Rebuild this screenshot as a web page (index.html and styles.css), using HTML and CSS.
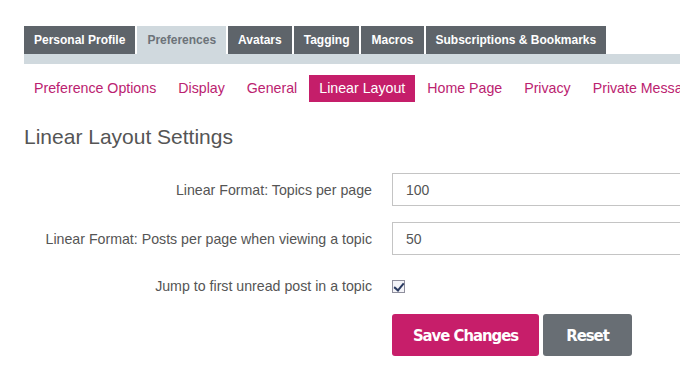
FILE: index.html
```html
<!DOCTYPE html>
<html lang="en">
<head>
  <meta charset="UTF-8" />
  <title>Linear Layout Settings</title>
  <link rel="stylesheet" href="styles.css">
</head>
<body>
  <div class="page">
    <ul class="tabs">
      <li class="tab">Personal Profile</li>
      <li class="tab active">Preferences</li>
      <li class="tab">Avatars</li>
      <li class="tab">Tagging</li>
      <li class="tab">Macros</li>
      <li class="tab">Subscriptions &amp; Bookmarks</li>
    </ul>
    <div class="tab-strip"></div>

    <ul class="subnav">
      <li><a href="#">Preference Options</a></li>
      <li><a href="#">Display</a></li>
      <li><a href="#">General</a></li>
      <li><a href="#" class="current">Linear Layout</a></li>
      <li><a href="#">Home Page</a></li>
      <li><a href="#">Privacy</a></li>
      <li><a href="#">Private Messages</a></li>
    </ul>

    <h1>Linear Layout Settings</h1>

    <form class="settings">
      <label class="label" for="topics">Linear Format: Topics per page</label>
      <input class="field" id="topics" type="text" value="100">

      <label class="label" for="posts">Linear Format: Posts per page when viewing a topic</label>
      <input class="field" id="posts" type="text" value="50">

      <label class="label" for="jump">Jump to first unread post in a topic</label>
      <div class="check-cell"><input class="check" id="jump" type="checkbox" checked></div>

      <div></div>
      <div class="buttons">
        <button type="button" class="btn btn-save">Save Changes</button>
        <button type="button" class="btn btn-reset">Reset</button>
      </div>
    </form>
  </div>
</body>
</html>
```

FILE: styles.css
```css
body {
    margin: 0;
    font-family: 'Liberation Sans', Arial, sans-serif;
    background: #ffffff;
    color: #555;
    overflow: hidden;
}
.page {
    padding: 26px 0 0 24px;
    width: 760px;
}
.tabs {
    display: flex;
    gap: 2px;
    list-style: none;
    margin: 0;
    padding: 0;
}
.tab {
    background-color: #5e646a;
    color: #fff;
    font-size: 12px;
    font-weight: bold;
    height: 28px;
    line-height: 28px;
    padding: 0 10px;
}
.tab.active {
    background-color: #d0d9de;
    color: #6c7379;
}
.tab-strip {
    height: 10px;
    background-color: #d0d9de;
    width: 656px;
}
.subnav {
    display: flex;
    gap: 2px;
    list-style: none;
    margin: 11px 0 0 0;
    padding: 0;
    white-space: nowrap;
}
.subnav a {
    display: block;
    font-size: 14.2px;
    line-height: 27px;
    padding: 0 10px;
    color: #bb2270;
    text-decoration: none;
}
.subnav a.current {
    background-color: #c51e6a;
    color: #fff;
}
h1 {
    font-size: 21px;
    font-weight: normal;
    color: #555;
    margin: 23px 0 24px 0;
}
.settings {
    display: grid;
    grid-template-columns: 348px 1fr;
    column-gap: 20px;
    row-gap: 16px;
    align-items: center;
}
.label {
    text-align: right;
    font-size: 14.2px;
    color: #555;
}
.field {
    height: 33px;
    box-sizing: border-box;
    border: 1px solid #c4c4c4;
    padding: 0 13px;
    font-family: 'Liberation Sans', Arial, sans-serif;
    font-size: 14px;
    color: #555;
    width: 400px;
}
.check-cell {
    height: 30px;
    display: flex;
    align-items: center;
}
.check {
    appearance: none;
    margin: 0;
    width: 13px;
    height: 13px;
    border: 1px solid #8f8f9d;
    background: #f4f4f8;
    position: relative;
}
.check:checked::after {
    content: "";
    position: absolute;
    left: 3px;
    top: 0px;
    width: 4px;
    height: 8px;
    border: solid #2a3a60;
    border-width: 0 2px 2px 0;
    transform: rotate(40deg);
}
.buttons {
    display: flex;
    gap: 4px;
    margin-top: -3px;
}
.btn {
    border: none;
    border-radius: 3px;
    color: #fff;
    font-family: 'DejaVu Sans Condensed', 'DejaVu Sans', sans-serif;
    font-weight: bold;
    font-size: 16.5px;
    letter-spacing: -1px;
    height: 42px;
    cursor: pointer;
}
.btn-save {
    background-color: #c71e6a;
    width: 147px;
}
.btn-reset {
    background-color: #686e74;
    width: 89px;
}
```
